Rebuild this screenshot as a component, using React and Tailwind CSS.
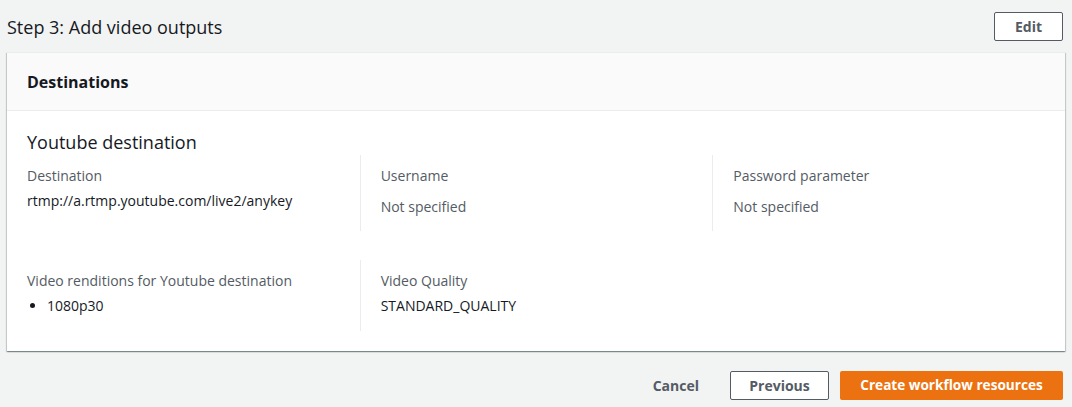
import React from "react";

const font = { fontFamily: '"Open Sans", "Noto Sans", Arial, sans-serif' };

function Field({ label, value, muted, border, list, pb }) {
  return (
    <div className={`px-5 ${border ? "border-l border-[#eaeded]" : ""}`}>
      <div className={`pt-[10px] ${pb}`}>
        <div className="text-[14px] leading-[22px] text-[#545b64]">{label}</div>
        {list ? (
          <ul className="mt-[3px] pl-[20px] list-disc text-[14px] leading-[22px] text-[#16191f]">
            <li>{value}</li>
          </ul>
        ) : (
          <div className={`text-[14px] leading-[22px] ${muted ? "mt-[9px] text-[#545b64]" : "mt-[3px] text-[#16191f]"}`}>{value}</div>
        )}
      </div>
    </div>
  );
}

export default function App() {
  return (
    <div className="min-h-[407px] w-[1072px] bg-[#f2f3f3] px-[7px] pt-[12px]" style={font}>
      <div className="flex items-center justify-between">
        <h2 className="text-[18px] leading-[28px] text-[#16191f]">Step 3: Add video outputs</h2>
        <button className="mr-[2px] h-[29px] w-[69px] rounded-[2px] border border-[#545b64] bg-white text-[14px] font-bold text-[#545b64]">
          Edit
        </button>
      </div>

      <div className="mt-[11px] bg-white border-t border-[#eaeded] shadow-[0_1px_1px_0_rgba(0,28,36,0.3),1px_1px_1px_0_rgba(0,28,36,0.15),-1px_1px_1px_0_rgba(0,28,36,0.15)]">
        <div className="h-[58px] flex items-center px-5 bg-[#fafafa] border-b border-[#eaeded]">
          <h2 className="text-[16px] font-bold text-[#16191f] leading-[22px]">Destinations</h2>
        </div>
        <div className="px-5 pt-[19px] pb-[20px]">
          <h3 className="text-[18px] leading-[24px] text-[#16191f]">Youtube destination</h3>
          <div className="-mx-5 mt-[1px] grid grid-cols-3">
            <Field label="Destination" value="rtmp://a.rtmp.youtube.com/live2/anykey" pb="pb-[13px]" />
            <Field label="Username" value="Not specified" muted border pb="pb-[13px]" />
            <Field label="Password parameter" value="Not specified" muted border pb="pb-[13px]" />
          </div>
          <div className="-mx-5 mt-[29px] grid grid-cols-3">
            <Field label="Video renditions for Youtube destination" value="1080p30" list pb="pb-[14px]" />
            <Field label="Video Quality" value="STANDARD_QUALITY" border pb="pb-[14px]" />
            <div />
          </div>
        </div>
      </div>

      <div className="mt-[20px] flex items-center justify-end gap-[11px] pr-[2px]">
        <button className="px-5 h-[29px] text-[14px] font-bold text-[#545b64]">Cancel</button>
        <button className="h-[29px] w-[99px] rounded-[2px] border border-[#545b64] bg-white text-[14px] font-bold text-[#545b64]">
          Previous
        </button>
        <button className="h-[29px] w-[223px] rounded-[2px] bg-[#ec7211] text-[13.6px] font-bold text-white">
          Create workflow resources
        </button>
      </div>
    </div>
  );
}
